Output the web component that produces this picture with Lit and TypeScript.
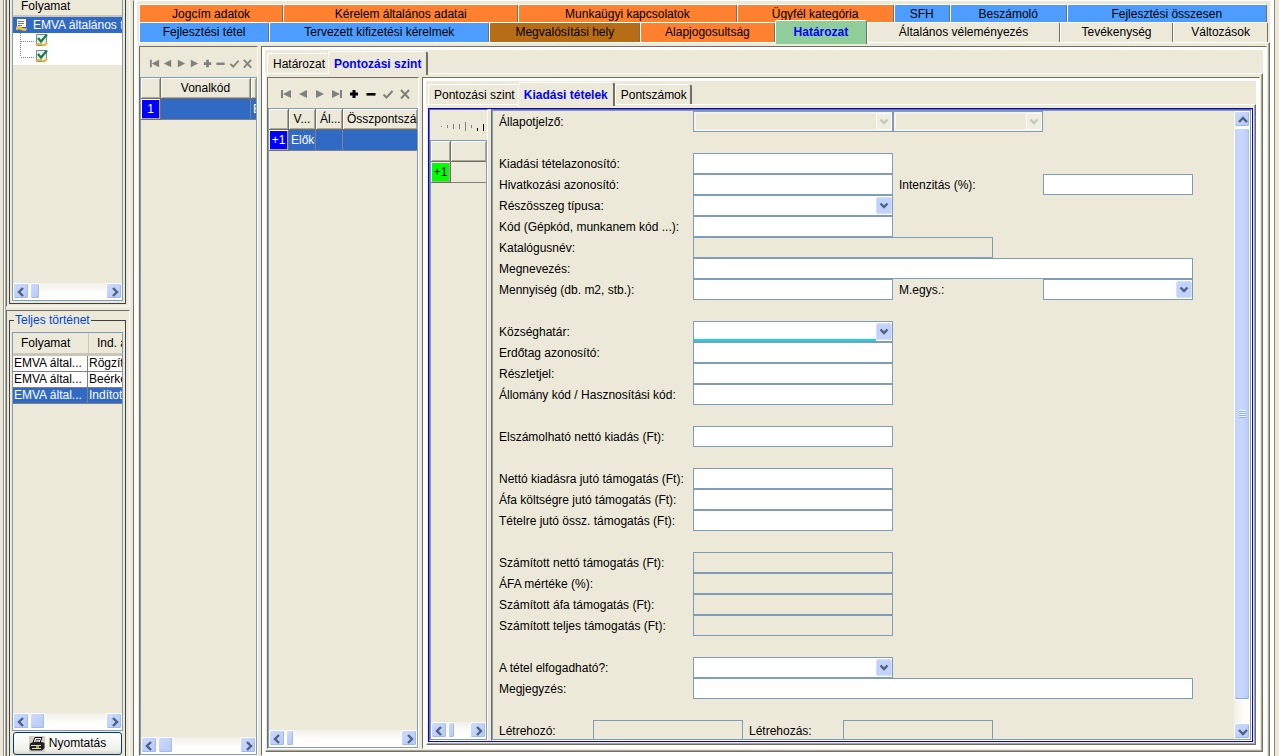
import { LitElement, html, svg, css, nothing, TemplateResult } from "lit";
import { customElement, property } from "lit/decorators.js";
import { classMap } from "lit/directives/class-map.js";
import { styleMap } from "lit/directives/style-map.js";

const ARROWS: Record<string, string> = {
  left: "M9 4 5 8l4 4",
  right: "M6 4l4 4-4 4",
  up: "M4 10l4-4 4 4",
  down: "M4 6l4 4 4-4",
};

@customElement("xp-scrollbar")
export class XpScrollbar extends LitElement {
  @property({ type: Boolean, reflect: true }) vertical = false;
  @property({ type: Number }) thumb = 14;

  static styles = css`
    :host {
      display: flex;
      flex: none;
      height: 17px;
      gap: 1px;
      background: linear-gradient(#f1efe8, #fefefb 60%);
      box-sizing: border-box;
      overflow: hidden;
    }
    :host([vertical]) {
      flex-direction: column;
      width: 16px;
      height: auto;
      background: linear-gradient(90deg, #f1efe8, #fefefb 60%);
    }
    .arrow,
    .thumb {
      box-sizing: border-box;
      flex: none;
      border: 1px solid #fff;
      border-radius: 2px;
      background: linear-gradient(135deg, #cddbfb, #b4c8f6);
      box-shadow: inset -1px -1px 0 #a3b9ec;
    }
    .arrow {
      width: 16px;
      height: 16px;
      padding: 0;
      display: grid;
      place-items: center;
    }
    .arrow svg {
      width: 16px;
      height: 16px;
      fill: none;
      stroke: #4d6185;
      stroke-width: 2.4;
    }
    .thumb {
      height: 16px;
    }
    .tall {
      width: 16px;
      height: auto;
      flex: 573;
      display: grid;
      place-items: center;
      background: linear-gradient(90deg, #c3d3fd, #c9d8fc 50%, #b5cbf7);
      box-shadow: inset 0 -1px 0 #8fa8e0, inset -1px 0 0 #a9c0f0;
    }
    .grip {
      width: 7px;
      height: 8px;
      background: repeating-linear-gradient(#eef4fe 0 1px, #8cb0f8 1px 2px);
    }
    .rest {
      flex: 1;
    }
    .tallrest {
      flex: 21;
    }
  `;

  private arrow(dir: string, label: string) {
    return html`<button class="arrow" type="button" tabindex="-1" aria-label=${label}>
      <svg viewBox="0 0 16 16"><path d=${ARROWS[dir]} /></svg>
    </button>`;
  }

  render() {
    if (this.vertical) {
      return html`${this.arrow("up", "Fel")}
        <div class="thumb tall"><div class="grip"></div></div>
        <div class="tallrest"></div>
        ${this.arrow("down", "Le")}`;
    }
    return html`${this.arrow("left", "Balra")}
      <div class="thumb" style=${styleMap({ width: `${this.thumb}px` })}></div>
      <div class="rest"></div>
      ${this.arrow("right", "Jobbra")}`;
  }
}

interface TopTab {
  text: string;
  size: number;
  tone?: string;
  selected?: boolean;
}

const TOP_ROW: TopTab[] = [
  { text: "Jogcím adatok", size: 144, tone: "orange" },
  { text: "Kérelem általános adatai", size: 236, tone: "orange" },
  { text: "Munkaügyi kapcsolatok", size: 219, tone: "orange" },
  { text: "Ügyfél kategória", size: 157, tone: "orange" },
  { text: "SFH", size: 55, tone: "blue" },
  { text: "Beszámoló", size: 116, tone: "blue" },
  { text: "Fejlesztési összesen", size: 201, tone: "blue" },
];

const BOTTOM_ROW: TopTab[] = [
  { text: "Fejlesztési tétel", size: 130, tone: "blue" },
  { text: "Tervezett kifizetési kérelmek", size: 221, tone: "blue" },
  { text: "Megvalósítási hely", size: 151, tone: "brown" },
  { text: "Alapjogosultság", size: 134, tone: "orange" },
  { text: "Határozat", size: 92, tone: "green", selected: true },
  { text: "Általános véleményezés", size: 193, tone: "plain" },
  { text: "Tevékenység", size: 113, tone: "plain" },
  { text: "Változások", size: 94, tone: "plain" },
];

type Kind = "text" | "readonly" | "select" | "disabled" | "focus";
interface Field {
  kind: Kind;
  width: "w150" | "w200" | "w300" | "w500";
}
interface Row {
  label?: string;
  field?: Field;
  label2?: string;
  field2?: Field;
  gap?: boolean;
  narrow?: boolean;
}

const f = (kind: Kind = "text", width: Field["width"] = "w200"): Field => ({ kind, width });

const ROWS: Row[] = [
  { label: "Állapotjelző:", field: f("disabled"), field2: f("disabled", "w150") },
  { gap: true },
  { label: "Kiadási tételazonosító:", field: f() },
  { label: "Hivatkozási azonosító:", field: f(), label2: "Intenzitás (%):", field2: f("text", "w150") },
  { label: "Részösszeg típusa:", field: f("select") },
  { label: "Kód (Gépkód, munkanem kód ...):", field: f() },
  { label: "Katalógusnév:", field: f("readonly", "w300") },
  { label: "Megnevezés:", field: f("text", "w500") },
  { label: "Mennyiség (db. m2, stb.):", field: f(), label2: "M.egys.:", field2: f("select", "w150") },
  { gap: true },
  { label: "Községhatár:", field: f("focus") },
  { label: "Erdőtag azonosító:", field: f() },
  { label: "Részletjel:", field: f() },
  { label: "Állomány kód / Hasznosítási kód:", field: f() },
  { gap: true },
  { label: "Elszámolható nettó kiadás (Ft):", field: f() },
  { gap: true },
  { label: "Nettó kiadásra jutó támogatás (Ft):", field: f() },
  { label: "Áfa költségre jutó támogatás (Ft):", field: f() },
  { label: "Tételre jutó össz. támogatás (Ft):", field: f() },
  { gap: true },
  { label: "Számított nettó támogatás (Ft):", field: f("readonly") },
  { label: "ÁFA mértéke (%):", field: f("readonly") },
  { label: "Számított áfa támogatás (Ft):", field: f("readonly") },
  { label: "Számított teljes támogatás (Ft):", field: f("readonly") },
  { gap: true },
  { label: "A tétel elfogadható?:", field: f("select") },
  { label: "Megjegyzés:", field: f("text", "w500") },
  { gap: true },
  {
    label: "Létrehozó:",
    field: f("readonly", "w150"),
    label2: "Létrehozás:",
    field2: f("readonly", "w150"),
    narrow: true,
  },
];

const NAV_ICONS: { name: string; shape: TemplateResult }[] = [
  { name: "Első", shape: svg`<path d="M1 2h2v8H1zM3 6l8-4v8z"/>` },
  { name: "Előző", shape: svg`<path d="M2 6l8-4v8z"/>` },
  { name: "Következő", shape: svg`<path d="M10 6L2 2v8z"/>` },
  { name: "Utolsó", shape: svg`<path d="M9 2h2v8H9zM9 6L1 2v8z"/>` },
  { name: "Új", shape: svg`<path d="M4.5 2h3v2.5H10v3H7.500V10h-3V7.500H2v-3h2.500z"/>` },
  { name: "Törlés", shape: svg`<path d="M1.500 5h9v2.600h-9z"/>` },
  { name: "Mentés", shape: svg`<path class="line" d="M1.500 6.500l3 3L10.500 3"/>` },
  { name: "Mégse", shape: svg`<path class="line" d="M2 2l8 8.500M10 2L2 10.500"/>` },
];

/* Heights of the squeezed icons in the narrowest toolbar. */
const TICKS = [
  { h: 1, y: 5, on: false },
  { h: 3, y: 4, on: false },
  { h: 5, y: 3, on: false },
  { h: 5, y: 3, on: false },
  { h: 9, y: 1, on: false },
  { h: 3, y: 4, on: false },
  { h: 3, y: 7, on: true },
  { h: 7, y: 3, on: true },
];

@customElement("app-root")
export class AppRoot extends LitElement {
  static styles = css`
    :host {
      display: block;
      font: 12px/15px "Liberation Sans", Arial, sans-serif;
      color: #000;
      background: #ece9d8;
    }
    * {
      box-sizing: border-box;
    }
    button,
    input,
    select {
      font: inherit;
      color: inherit;
      margin: 0;
    }
    .window {
      display: flex;
      height: 100vh;
      overflow: hidden;
    }
    .edge {
      flex: none;
      width: 6px;
      border-right: 1px solid #aca899;
      background: linear-gradient(90deg, #ece9d8 3px, #909090 3px 4px, #fff 4px);
    }
    .edgeright {
      flex: none;
      width: 5px;
      border-left: 1px solid #868a8e;
      background: #ece9d8;
    }

    /* side column */
    .side {
      flex: none;
      width: 124px;
      display: flex;
      flex-direction: column;
      gap: 3px;
    }
    .sidebox {
      display: flex;
      border-left: 1px solid #716f64;
      border-right: 1px solid #fff;
    }
    .processes {
      height: 307px;
      border-bottom: 1px solid #fff;
      padding: 0 3px 2px 2px;
    }
    .history {
      flex: 1;
      min-height: 0;
      border-top: 1px solid #716f64;
      padding: 1px 3px 0 2px;
    }
    .etched {
      flex: 1;
      min-width: 0;
      margin: 0;
      padding: 0 2px 2px;
      border: 1px solid #404040;
      border-top: 0;
      display: flex;
      flex-direction: column;
    }
    .titled {
      border-top: 1px solid #404040;
      border-bottom: 0;
      padding-bottom: 1px;
    }
    .titled legend {
      margin-left: 2px;
      padding: 0 1px;
      color: #0046d5;
      font-size: 12px;
      line-height: 16px;
    }
    .fieldbody {
      display: flex;
      flex-direction: column;
      height: 100%;
      padding-top: 4px;
    }
    .inset {
      flex: 1;
      min-height: 0;
      border: 1px solid #7f9db9;
      display: flex;
      flex-direction: column;
      overflow: hidden;
      background: #ece9d8;
    }
    .open {
      border-top: 0;
    }
    .stretch {
      flex: 1;
      min-height: 0;
      overflow: hidden;
    }
    .treehead {
      height: 17px;
      line-height: 13px;
      padding-left: 8px;
      border-bottom: 2px solid #cbc7b8;
      white-space: nowrap;
    }
    .tree {
      margin: 0;
      padding: 0;
      list-style: none;
      background: #fff;
    }
    .tree ul {
      margin: 0;
      padding: 0;
      list-style: none;
    }
    .node {
      display: flex;
      align-items: center;
      height: 16px;
      line-height: 16px;
      white-space: nowrap;
      overflow: hidden;
    }
    .node svg {
      flex: none;
    }
    .rootnode {
      background: #316ac5;
      color: #fff;
      padding-left: 2px;
      gap: 5px;
    }
    .leafnode {
      padding-left: 7px;
    }
    .histtable {
      width: 100%;
      table-layout: fixed;
      border-collapse: separate;
      border-spacing: 0;
      white-space: nowrap;
    }
    .c75 {
      width: 75px;
    }
    .histtable th {
      height: 23px;
      padding: 0 0 0 8px;
      font-weight: normal;
      text-align: left;
      border-bottom: 3px solid #cbc7b8;
      overflow: hidden;
    }
    .histtable th + th {
      border-left: 1px solid #cbc7b8;
    }
    .histtable td {
      height: 16px;
      padding: 0 1px;
      line-height: 15px;
      border-bottom: 1px solid #808080;
      background: #fff;
      overflow: hidden;
    }
    .histtable td:first-child {
      border-right: 1px solid #808080;
    }
    .histtable .chosen td {
      background: #316ac5;
      color: #fff;
    }
    .print {
      flex: none;
      height: 23px;
      margin: 1px 1px 0;
      padding: 0;
      display: flex;
      align-items: center;
      justify-content: center;
      gap: 4px;
      border: 1px solid #003c74;
      border-radius: 3px;
      background: linear-gradient(#fff, #f0f0ea 80%, #dcd7cb);
    }

    /* nested tab panes */
    .pane {
      flex: 1;
      min-width: 0;
      display: flex;
      flex-direction: column;
      border-left: 1px solid #716f64;
      border-top: 1px solid #716f64;
      border-right: 1px solid #fff;
      border-bottom: 1px solid #fff;
      background: #fff;
      padding: 3px;
    }
    .main {
      margin-left: 3px;
      border-top: 1px solid #fff;
      border-bottom: 0;
      padding: 0 3px;
    }
    .body {
      flex: 1;
      min-height: 0;
      display: flex;
      background: #ece9d8;
      border: 1px solid #fff;
      border-right-color: #716f64;
      border-bottom-color: #716f64;
    }
    .shade {
      flex: 1;
      min-width: 0;
      min-height: 0;
      display: flex;
      border-right: 1px solid #aca899;
      border-bottom: 1px solid #aca899;
      padding: 3px 1px 1px;
    }
    .mainbody,
    .mainshade {
      border-bottom: 0;
      padding-bottom: 0;
    }
    .split {
      flex: 1;
      min-width: 0;
      display: flex;
      gap: 3px;
    }
    .child {
      flex: none;
      min-width: 0;
      display: flex;
      flex-direction: column;
      border: 1px solid #fff;
      border-left-color: #716f64;
      border-top-color: #716f64;
    }
    .child1 {
      width: 119px;
    }
    .child2 {
      width: 152px;
    }
    .child3 {
      width: 59px;
    }
    .formchild {
      flex: 1;
    }
    .blueframe {
      border: 1px solid #0000ff;
    }

    /* coloured tab rows */
    .toprows {
      flex: none;
      background: #ece9d8;
      height: 41px;
      padding: 3px 2px 0;
    }
    .toprow {
      display: flex;
      height: 18px;
      padding-right: 1px;
    }
    .toprow + .toprow {
      height: 20px;
      padding-right: 0;
    }
    .toptab {
      min-width: 0;
      padding: 0;
      border: 1px solid #fff;
      border-bottom: 0;
      border-right: 1px solid #716f64;
      border-radius: 2px 2px 0 0;
      line-height: 19px;
      white-space: nowrap;
      overflow: hidden;
      background: #ece9d8;
    }
    .orange {
      background: #ff802f;
    }
    .blue {
      background: #4c9dff;
    }
    .brown {
      background: #b66d16;
    }
    .green {
      background: #8fcd9a;
    }
    .topselected {
      margin: -2px 0;
      color: #0000ff;
      font-weight: bold;
      z-index: 1;
    }

    /* plain tab rows */
    .tabs {
      flex: none;
      display: flex;
      align-items: flex-end;
      height: 23px;
      padding-left: 2px;
      background: #ece9d8;
    }
    .tab {
      height: 20px;
      padding: 0 2px 0 5px;
      border: 1px solid #fff;
      border-bottom: 0;
      border-radius: 3px 3px 0 0;
      border-right-color: transparent;
      background: #ece9d8;
      white-space: nowrap;
      line-height: 20px;
      position: relative;
    }
    .tabselected {
      height: 24px;
      margin-bottom: -2px;
      padding: 0 5px;
      border-right: 2px solid #716f64;
      color: #0000ff;
      font-weight: bold;
      line-height: 24px;
    }
    .tablast {
      padding-right: 3px;
      border-right: 2px solid #716f64;
    }

    /* toolbars */
    .toolbar {
      flex: none;
      height: 30px;
      display: flex;
      align-items: center;
      justify-content: center;
    }
    .tool {
      flex: 0 1 17px;
      min-width: 0;
      padding: 0;
      border: 0;
      background: none;
      height: 17px;
      display: grid;
      place-items: center;
      color: #808080;
    }
    .tool svg {
      width: 12px;
      height: 12px;
      fill: currentColor;
    }
    .tool .line {
      fill: none;
      stroke: currentColor;
      stroke-width: 2;
    }
    .compact {
      padding: 2px 3px 0 8px;
    }
    .compact .tool svg {
      width: 11px;
      height: 11px;
    }
    .roomy {
      padding: 2px 4px 0 8px;
    }
    .tiny {
      padding: 3px 0 0 8px;
    }
    .tiny .tool svg {
      width: 1px;
      height: 11px;
    }
    .tool.active {
      color: #000;
    }

    /* grids */
    .grid {
      table-layout: fixed;
      width: 100%;
      border-collapse: separate;
      border-spacing: 0;
      white-space: nowrap;
    }
    .grid th,
    .grid td {
      height: 21px;
      padding: 0 2px;
      overflow: hidden;
      font-weight: normal;
      border-right: 1px solid #808080;
      border-bottom: 1px solid #808080;
      line-height: 20px;
    }
    .grid th {
      box-shadow: inset 1px 1px 0 #fff, inset -1px -1px 0 #aca899;
      border-color: #716f64;
      padding: 0 4px;
    }
    .grid th:last-child,
    .grid td:last-child {
      border-right: 0;
    }
    .grid .startcell {
      text-align: left;
    }
    .filled td {
      background: #316ac5;
      color: #fff;
    }
    .grid .marker {
      padding: 0;
      text-align: center;
      box-shadow: inset 1px 1px 0 #fff, inset -1px -1px 0 #aca899;
      border-color: #716f64;
      background: #0000ff;
      color: #fff;
    }
    .grid .fresh {
      background: #00ff00;
      color: #000;
    }
    .c20 {
      width: 20px;
    }
    .c27 {
      width: 27px;
    }
    .c90 {
      width: 90px;
    }

    /* form */
    .formbox {
      flex-direction: row;
    }
    .form {
      flex: 1;
      min-width: 0;
      overflow: hidden;
      padding-left: 6px;
    }
    .row {
      display: grid;
      grid-template-columns: 194px 200px 150px 150px;
      height: 21px;
    }
    .narrow {
      grid-template-columns: 94px 150px 100px 150px;
    }
    .label {
      line-height: 22px;
      white-space: nowrap;
    }
    .second {
      padding-left: 6px;
    }
    .field {
      height: 21px;
      border: 1px solid #7f9db9;
      border-radius: 0;
      background: #fff;
      padding: 0 2px;
      outline: 0;
    }
    .w150 {
      width: 150px;
    }
    .w200 {
      width: 200px;
    }
    .w300 {
      width: 300px;
    }
    .w500 {
      width: 500px;
    }
    .readonly {
      background: #ece9d8;
    }
    .combo {
      position: relative;
      display: block;
      height: 21px;
    }
    .combo select {
      width: 100%;
      appearance: none;
      display: block;
    }
    .combo svg {
      position: absolute;
      right: 1px;
      top: 2px;
      width: 16px;
      height: 17px;
      pointer-events: none;
    }
    .disabled select {
      background: #ece9d8;
      opacity: 1;
      box-shadow: inset 0 0 0 2px #f5f3ea;
    }
    .focus select {
      background: linear-gradient(#00e0e8, #00e0e8) left bottom / calc(100% - 16px) 2px no-repeat #fff;
    }
  `;

  private topTabs(row: TopTab[]) {
    return html`<div class="toprow" role="tablist">
      ${row.map(
        (t) => html`<button
          type="button"
          role="tab"
          aria-selected=${t.selected ? "true" : "false"}
          class=${classMap({
            toptab: true,
            [t.tone ?? "plain"]: true,
            topselected: !!t.selected,
          })}
          style=${styleMap({ flex: `${t.size} 1 0` })}
        >
          ${t.text}
        </button>`
      )}
    </div>`;
  }

  private tabs(names: string[], selected: number) {
    return html`<div class="tabs" role="tablist">
      ${names.map(
        (n, i) => html`<button
          type="button"
          role="tab"
          aria-selected=${i === selected ? "true" : "false"}
          class=${classMap({
            tab: true,
            tabselected: i === selected,
            tablast: i > selected,
          })}
        >
          ${n}
        </button>`
      )}
    </div>`;
  }

  private toolbar(kind: string, editable: boolean) {
    return html`<div class="toolbar ${kind}" role="toolbar">
      ${NAV_ICONS.map(
        (icon, i) => html`<button
          type="button"
          aria-label=${icon.name}
          class=${classMap({ tool: true, active: editable && (i === 4 || i === 5) })}
        >
          <svg viewBox="0 0 12 12">
            ${kind === "compact" && i === 3 ? NAV_ICONS[2].shape : icon.shape}
          </svg>
        </button>`
      )}
    </div>`;
  }

  private tinyToolbar() {
    return html`<div class="toolbar tiny" role="toolbar">
      ${TICKS.map(
        (t, i) => html`<button
          type="button"
          aria-label=${NAV_ICONS[i].name}
          class=${classMap({ tool: true, active: t.on })}
        >
          <svg viewBox="0 0 1 11"><rect y=${t.y} width="1" height=${t.h} /></svg>
        </button>`
      )}
    </div>`;
  }

  private control(field: Field, id: string, name: string) {
    if (field.kind === "text" || field.kind === "readonly") {
      return html`<input
        id=${id}
        type="text"
        aria-label=${name}
        class="field ${field.width} ${field.kind}"
        ?readonly=${field.kind === "readonly"}
      />`;
    }
    const off = field.kind === "disabled";
    return html`<span class="combo ${field.width} ${field.kind}">
      <select id=${id} class="field" aria-label=${name} ?disabled=${off}>
        <option></option>
      </select>
      <svg viewBox="0 0 16 17">
        <rect
          x="0.5"
          y="0.5"
          width="15"
          height="16"
          rx="1.500"
          fill=${off ? "#efeee3" : "#c1d2fb"}
          stroke=${off ? "#fbfaf4" : "#d3dffc"}
        />
        <path
          d="M4.500 6.500L8 10l3.500-3.500"
          fill="none"
          stroke=${off ? "#c9c7ba" : "#4d6185"}
          stroke-width="2.400"
        />
      </svg>
    </span>`;
  }

  private formRow(r: Row, i: number) {
    if (r.gap) return html`<div class="row"></div>`;
    return html`<div class=${classMap({ row: true, narrow: !!r.narrow })}>
      <label class="label" for="a${i}">${r.label}</label>
      ${this.control(r.field!, `a${i}`, r.label!)}
      ${r.label2 ? html`<label class="label second" for="b${i}">${r.label2}</label>` : nothing}
      ${r.field2 ? this.control(r.field2, `b${i}`, r.label2 ?? r.label!) : nothing}
    </div>`;
  }

  private leaf(last: boolean) {
    return html`<li class="node leafnode">
      <svg width="28" height="16" viewBox="0 0 28 16">
        <path
          d=${last ? "M.5 0v8M1 8.500h14" : "M.5 0v16M1 8.500h14"}
          fill="none"
          stroke="#808080"
          stroke-dasharray="1 1"
        />
        <path d="M16.500 1.500h10v9l-4 2h-6z" fill="#e9edf0" stroke="#7d8791" />
        <path d="M16 12.500q3-3 6-1t5-2" fill="none" stroke="#e8b93a" stroke-width="2" />
        <path d="M18 5l3 3.500L27 1.500" fill="none" stroke="#14803c" stroke-width="2.200" />
      </svg>
    </li>`;
  }

  private side() {
    return html`<aside class="side">
      <section class="sidebox processes">
        <div class="etched">
          <div class="inset open">
            <div class="treehead">Folyamat</div>
            <div class="stretch">
              <ul class="tree">
                <li>
                  <div class="node rootnode">
                    <svg width="13" height="14" viewBox="0 0 13 14">
                      <path d="M2 1h9v8H2z" fill="#fff6d8" />
                      <path d="M3 3.500h6M3 5.500h6M3 7.500h4" stroke="#6c7c92" />
                      <path d="M1 9q3-2 5 0t6 1l-1 3q-4 0-5-1t-5 0z" fill="#f0c13c" />
                    </svg>
                    EMVA általános támogatás
                  </div>
                  <ul>
                    ${this.leaf(false)} ${this.leaf(true)}
                  </ul>
                </li>
              </ul>
            </div>
            <xp-scrollbar .thumb=${10}></xp-scrollbar>
          </div>
        </div>
      </section>
      <section class="sidebox history">
        <fieldset class="etched titled">
          <legend>Teljes történet</legend>
          <div class="fieldbody">
            <div class="inset">
              <div class="stretch">
                <table class="histtable">
                  <colgroup>
                    <col class="c75" />
                    <col />
                  </colgroup>
                  <thead>
                    <tr>
                      <th>Folyamat</th>
                      <th>Ind. adatok</th>
                    </tr>
                  </thead>
                  <tbody>
                    ${["Rögzítés", "Beérkezés", "Indított"].map(
                      (s, i) => html`<tr class=${i === 2 ? "chosen" : ""}>
                        <td>EMVA által...</td>
                        <td>${s}</td>
                      </tr>`
                    )}
                  </tbody>
                </table>
              </div>
              <xp-scrollbar .thumb=${15}></xp-scrollbar>
            </div>
            <button class="print" type="button">
              <svg width="16" height="16" viewBox="0 0 16 16">
                <path d="M0 0h16v16H0z" fill="#d4d0c8" />
                <path d="M6 1.500h7l-2 5H4z" fill="#fff" stroke="#000" />
                <path d="M1 7.500L4 6h9l2.500 1v5L13 14.500H2L.5 13z" fill="#222" />
                <path d="M2 9.500h10M3 12.500h9" stroke="#d8d8d8" />
                <path d="M7 3.500h4M6 5h4" stroke="#555" />
                <path d="M7 11h3" stroke="#e8e000" stroke-width="1.500" />
              </svg>
              Nyomtatás
            </button>
          </div>
        </fieldset>
      </section>
    </aside>`;
  }

  private innerPane() {
    return html`<section class="pane">
      ${this.tabs(["Pontozási szint", "Kiadási tételek", "Pontszámok"], 1)}
      <div class="body">
        <div class="shade">
          <div class="split blueframe">
            <div class="child child3">
              ${this.tinyToolbar()}
              <div class="inset">
                <div class="stretch">
                  <table class="grid">
                    <colgroup>
                      <col class="c20" />
                      <col />
                    </colgroup>
                    <thead>
                      <tr><th></th><th></th></tr>
                    </thead>
                    <tbody>
                      <tr><td class="marker fresh">+1</td><td></td></tr>
                    </tbody>
                  </table>
                </div>
                <xp-scrollbar .thumb=${7}></xp-scrollbar>
              </div>
            </div>
            <div class="child formchild">
              <div class="inset formbox">
                <form class="form">${ROWS.map((r, i) => this.formRow(r, i))}</form>
                <xp-scrollbar vertical></xp-scrollbar>
              </div>
            </div>
          </div>
        </div>
      </div>
    </section>`;
  }

  private middlePane() {
    return html`<section class="pane">
      ${this.tabs(["Határozat", "Pontozási szint"], 1)}
      <div class="body">
        <div class="shade">
          <div class="split">
            <div class="child child2">
              ${this.toolbar("roomy", true)}
              <div class="inset">
                <div class="stretch">
                  <table class="grid">
                    <colgroup>
                      <col class="c20" />
                      <col class="c27" />
                      <col class="c27" />
                      <col />
                    </colgroup>
                    <thead>
                      <tr>
                        <th></th>
                        <th>V...</th>
                        <th>Ál...</th>
                        <th class="startcell">Összpontszám</th>
                      </tr>
                    </thead>
                    <tbody>
                      <tr class="filled">
                        <td class="marker">+1</td>
                        <td>Előkészítés</td>
                        <td></td>
                        <td></td>
                      </tr>
                    </tbody>
                  </table>
                </div>
                <xp-scrollbar .thumb=${8}></xp-scrollbar>
              </div>
            </div>
            ${this.innerPane()}
          </div>
        </div>
      </div>
    </section>`;
  }

  render() {
    return html`<div class="window">
      <div class="edge"></div>
      ${this.side()}
      <main class="pane main">
        <div class="toprows">${this.topTabs(TOP_ROW)} ${this.topTabs(BOTTOM_ROW)}</div>
        <div class="body mainbody">
          <div class="shade mainshade">
            <div class="split">
              <div class="child child1">
                ${this.toolbar("compact", false)}
                <div class="inset">
                  <div class="stretch">
                    <table class="grid">
                      <colgroup>
                        <col class="c20" />
                        <col class="c90" />
                        <col />
                      </colgroup>
                      <thead>
                        <tr><th></th><th>Vonalkód</th><th></th></tr>
                      </thead>
                      <tbody>
                        <tr class="filled">
                          <td class="marker">1</td>
                          <td></td>
                          <td>EMVA</td>
                        </tr>
                      </tbody>
                    </table>
                  </div>
                  <xp-scrollbar .thumb=${15}></xp-scrollbar>
                </div>
              </div>
              ${this.middlePane()}
            </div>
          </div>
        </div>
      </main>
      <div class="edgeright"></div>
    </div>`;
  }
}
